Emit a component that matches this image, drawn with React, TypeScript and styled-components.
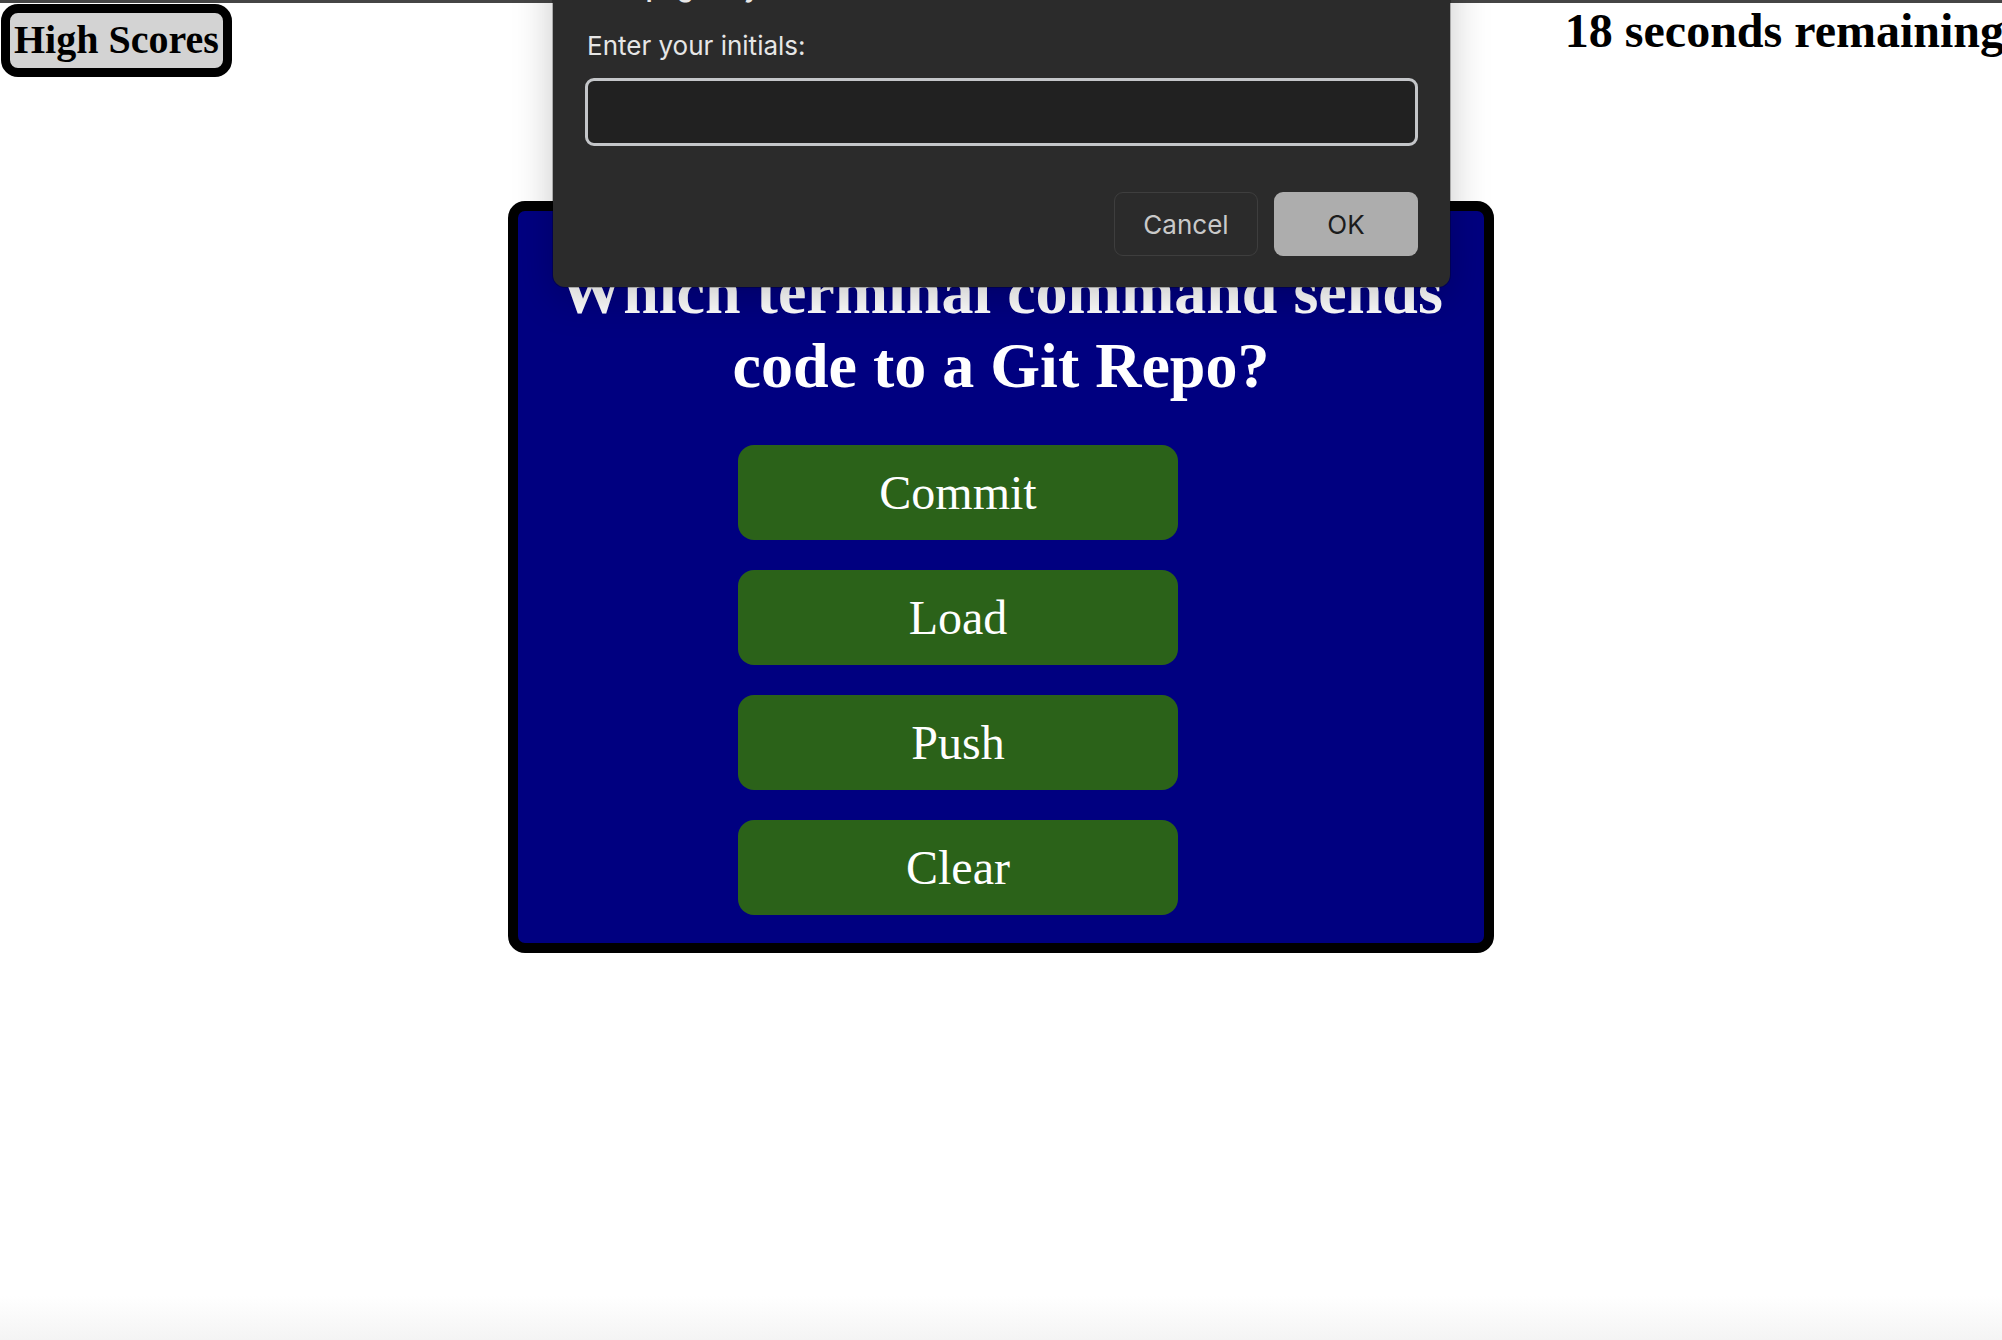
import React from "react";
import styled, { createGlobalStyle } from "styled-components";

const GlobalStyle = createGlobalStyle`
  html {
    min-height: 100%;
    background: linear-gradient(to bottom, #ffffff 0, #ffffff 1296px, #f4f4f4 1340px);
  }
  body {
    margin: 0;
    font-family: "Liberation Serif", "Times New Roman", serif;
    background: transparent;
  }
`;

const Page = styled.div`
  position: relative;
  min-height: 1340px;
  display: flex;
  flex-direction: column;
`;

const TopBar = styled.div`
  height: 3px;
  background: #454545;
`;

const Header = styled.header`
  display: flex;
  justify-content: space-between;
  align-items: flex-start;
`;

const HighScoresButton = styled.button`
  margin: 1px 0 0 1px;
  padding: 4px 4px 5px;
  border: 9px solid #000;
  border-radius: 17px;
  background: #d3d3d3;
  color: #000;
  font-family: "Liberation Serif", "Times New Roman", serif;
  font-weight: 700;
  font-size: 40px;
  line-height: 46px;
  cursor: pointer;
`;

const Timer = styled.h2`
  margin: 0 -2px 0 0;
  font-family: "Liberation Serif", "Times New Roman", serif;
  font-weight: 700;
  font-size: 48px;
  line-height: 55px;
  color: #000;
`;

const Card = styled.main`
  box-sizing: border-box;
  width: 986px;
  margin: 124px auto 0;
  padding: 44px 0 28px;
  border: 10px solid #000;
  border-radius: 17px;
  background: #000080;
  display: flex;
  flex-direction: column;
`;

const Question = styled.h1`
  margin: 0 20px 43px;
  color: #fff;
  text-align: center;
  font-family: "Liberation Serif", "Times New Roman", serif;
  font-weight: 700;
  font-size: 64px;
  line-height: 73.6px;
`;

const Answers = styled.div`
  display: flex;
  flex-direction: column;
  align-items: flex-start;
  gap: 30px;
  padding-left: 220px;
`;

const AnswerButton = styled.button`
  box-sizing: border-box;
  width: 440px;
  height: 95px;
  padding: 0;
  border: none;
  border-radius: 16px;
  background: #2b6219;
  color: #fff;
  font-family: "Liberation Serif", "Times New Roman", serif;
  font-size: 48px;
  line-height: 55px;
  cursor: pointer;
`;

const Dialog = styled.div`
  position: absolute;
  top: -60px;
  left: calc(50% - 448px);
  width: 897px;
  box-sizing: border-box;
  padding: 32px 32px 31px;
  background: #2b2b2b;
  border-radius: 12px;
  box-shadow: 0 10px 40px rgba(0, 0, 0, 0.22), 0 0 0 1px rgba(0, 0, 0, 0.25);
  font-family: "Inter", "Noto Sans", sans-serif;
  display: flex;
  flex-direction: column;
`;

const DialogTitle = styled.div`
  color: #e8e8e8;
  font-size: 26px;
  font-weight: 600;
  line-height: 32px;
  margin-bottom: 26px;
`;

const DialogLabel = styled.label`
  color: #e6e6e6;
  font-size: 26px;
  line-height: 32px;
  margin-bottom: 16px;
  padding-left: 2px;
`;

const DialogInput = styled.input`
  box-sizing: border-box;
  height: 68px;
  width: 100%;
  margin: 0 0 46px;
  padding: 0 16px;
  border: 3px solid #c4c6c9;
  border-radius: 9px;
  background: #212121;
  color: #e6e6e6;
  font-family: "Inter", "Noto Sans", sans-serif;
  font-size: 26px;
  outline: none;
`;

const DialogActions = styled.div`
  display: flex;
  justify-content: flex-end;
  gap: 16px;
`;

const DialogButton = styled.button<{ $primary?: boolean }>`
  box-sizing: border-box;
  width: 144px;
  height: 64px;
  border-radius: 9px;
  border: ${(p) => (p.$primary ? "none" : "1.5px solid #3e3e3e")};
  background: ${(p) => (p.$primary ? "#adadad" : "#2b2b2b")};
  color: ${(p) => (p.$primary ? "#1c1c1c" : "#c9c9c9")};
  font-family: "Inter", "Noto Sans", sans-serif;
  font-size: 26px;
  cursor: pointer;
`;

const answers = ["Commit", "Load", "Push", "Clear"];

export default function App() {
  return (
    <>
      <GlobalStyle />
      <Page>
        <TopBar />
        <Header>
          <HighScoresButton>High Scores</HighScoresButton>
          <Timer>18 seconds remaining</Timer>
        </Header>
        <Card>
          <Question>Which terminal command sends code to a Git Repo?</Question>
          <Answers>
            {answers.map((a) => (
              <AnswerButton key={a}>{a}</AnswerButton>
            ))}
          </Answers>
        </Card>
        <Dialog role="dialog">
          <DialogTitle>This page says</DialogTitle>
          <DialogLabel htmlFor="initials">Enter your initials:</DialogLabel>
          <DialogInput id="initials" type="text" />
          <DialogActions>
            <DialogButton>Cancel</DialogButton>
            <DialogButton $primary>OK</DialogButton>
          </DialogActions>
        </Dialog>
      </Page>
    </>
  );
}
